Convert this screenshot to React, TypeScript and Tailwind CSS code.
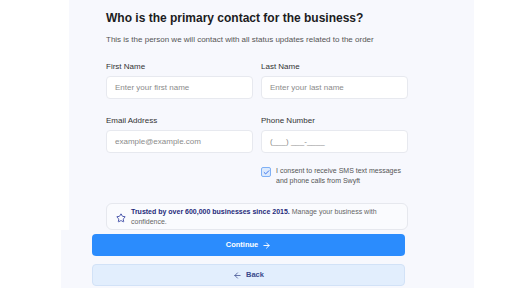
import { ArrowLeft, ArrowRight, Check, Star } from "lucide-react";

export default function App() {
  return (
    <div className="w-[512px] h-[288px] bg-white overflow-hidden font-['Liberation_Sans',Arial,sans-serif]">
      <div className="ml-[69px] w-[405px] bg-[#f7f8fd] pl-[37px] pt-[10px] pb-0">
        <h1 className="text-[12px] leading-[16px] font-bold text-[#1c1c22]">
          Who is the primary contact for the business?
        </h1>
        <p className="mt-[9px] text-[8px] leading-[10px] text-[#555]">
          This is the person we will contact with all status updates related to the order
        </p>

        <div className="mt-[17px] grid grid-cols-[147px_147px] gap-x-[8px]">
          <Field label="First Name" placeholder="Enter your first name" />
          <Field label="Last Name" placeholder="Enter your last name" />
        </div>
        <div className="mt-[17px] grid grid-cols-[147px_147px] gap-x-[8px]">
          <Field label="Email Address" placeholder="example@example.com" />
          <Field label="Phone Number" placeholder="(___) ___-____" />
        </div>

        <div className="mt-[13px] ml-[155px] flex items-start gap-[5px]">
          <span className="mt-[1px] w-[10px] h-[10px] shrink-0 rounded-[2px] border border-[#7fb0f5] bg-[#dceafd] flex items-center justify-center">
            <Check size={7} strokeWidth={3} className="text-[#2563eb]" />
          </span>
          <p className="text-[7px] leading-[10px] text-[#555]">
            I consent to receive SMS text messages
            <br />
            and phone calls from Swyft
          </p>
        </div>

        <div className="mt-[17px] w-[302px] h-[27px] rounded-[6px] border border-[#e6e8ee] bg-[#fafbfe] flex items-center pl-[9px] pr-[10px] gap-[5px]">
          <Star size={10} strokeWidth={2} className="text-[#2b3a9c] shrink-0 mt-[2px]" />
          <p className="text-[7px] leading-[10px] text-[#666]">
            <span className="font-bold text-[#1f2a7a]">Trusted by over 600,000 businesses since 2015.</span>{" "}
            Manage your business with confidence.
          </p>
        </div>
      </div>

      <div className="ml-[61px] w-[413px] h-[58px] bg-[#f7f8fd] pl-[31px] pt-[4px] flex flex-col gap-[8px]">
        <button className="w-[313px] h-[22px] rounded-[4px] bg-[#2b8cfd] text-white text-[7.5px] font-bold flex items-center justify-center gap-[4px]">
          Continue
          <ArrowRight size={9} strokeWidth={2.5} />
        </button>
        <button className="w-[313px] h-[22px] rounded-[4px] bg-[#e2eefd] border border-[#d2e2f7] text-[#3a4a8c] text-[7.5px] font-bold flex items-center justify-center gap-[4px]">
          <ArrowLeft size={9} strokeWidth={2} />
          Back
        </button>
      </div>
    </div>
  );
}

function Field({ label, placeholder }: { label: string; placeholder: string }) {
  return (
    <div>
      <label className="block text-[8px] leading-[10px] text-[#333]">{label}</label>
      <div className="mt-[4px] h-[23px] rounded-[4px] border border-[#e7e9ef] bg-white flex items-center pl-[8px] text-[8px] text-[#8b8b8b]">
        {placeholder}
      </div>
    </div>
  );
}
